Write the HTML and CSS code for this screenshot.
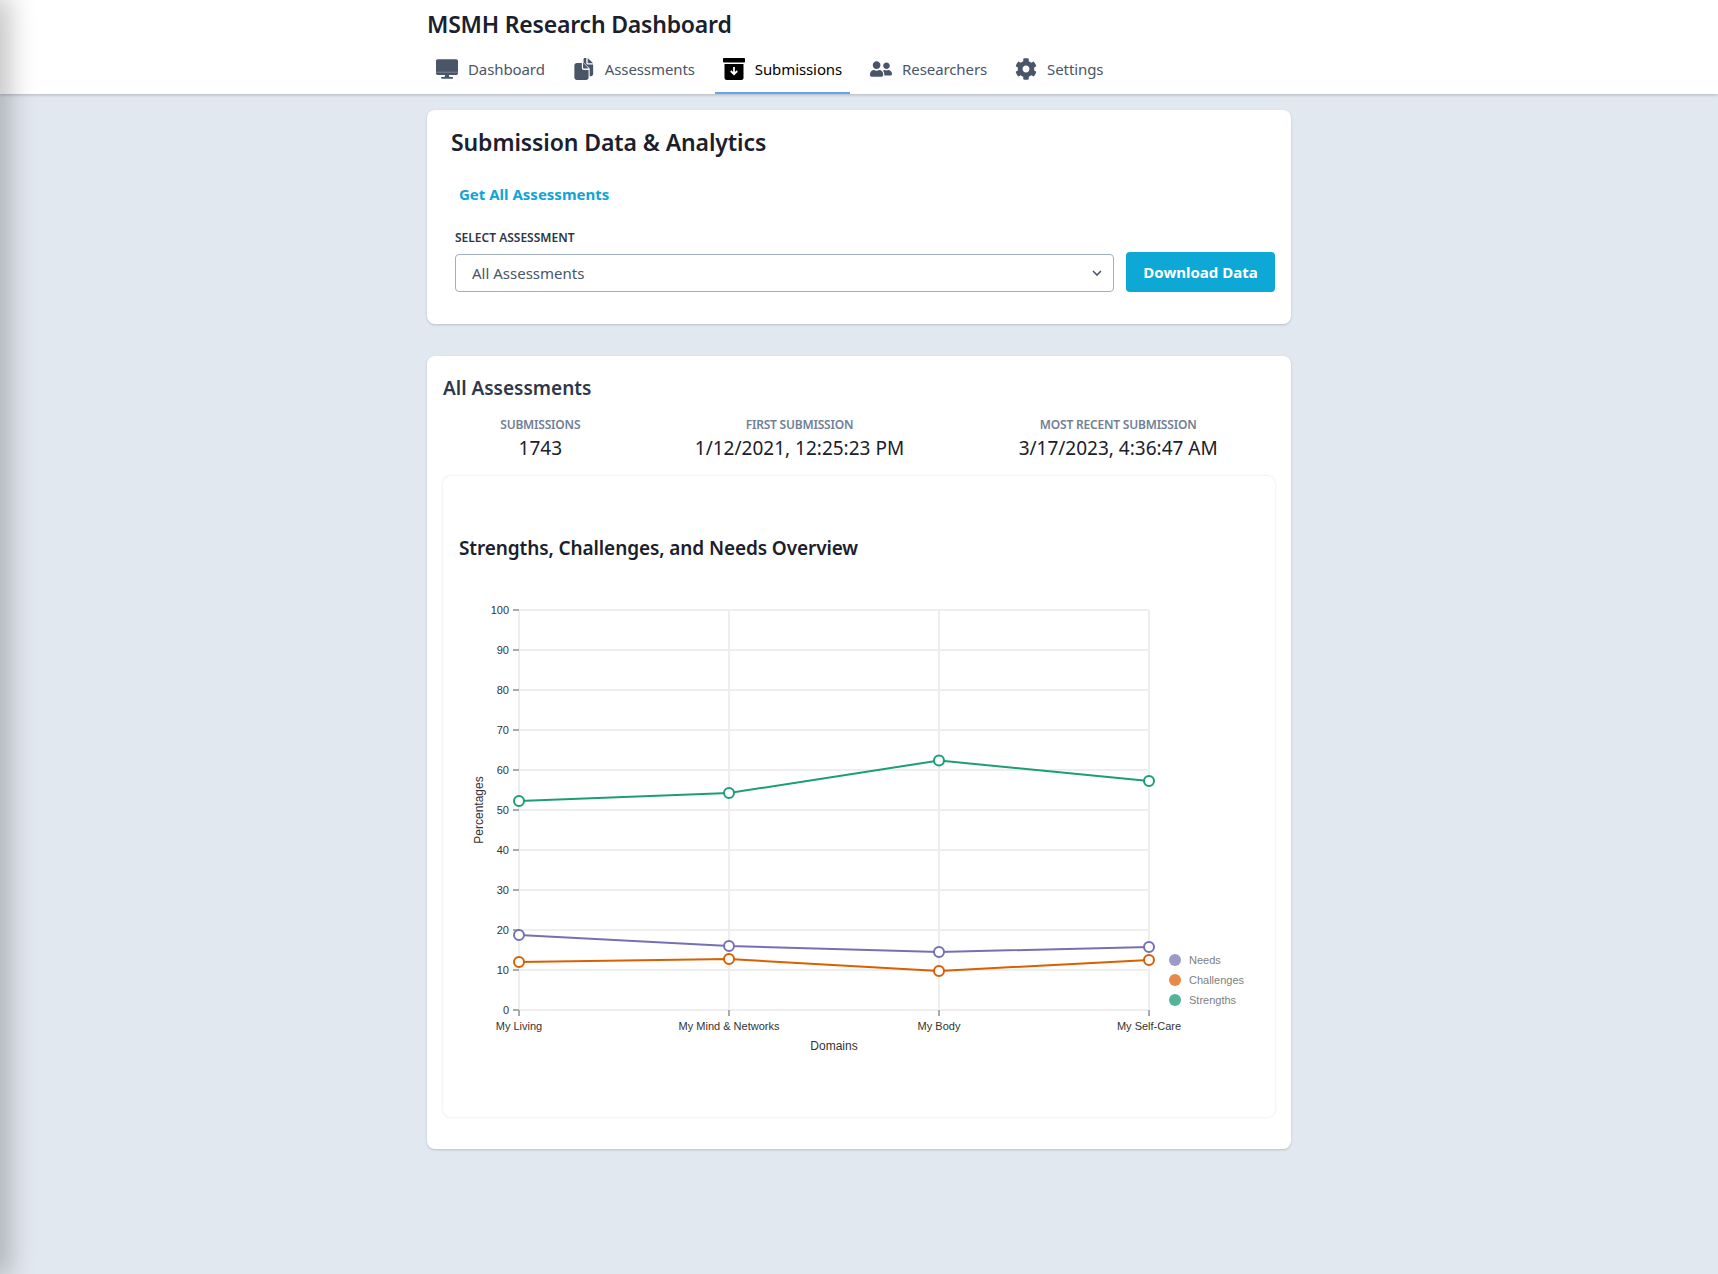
FILE: index.html
```html
<!DOCTYPE html>
<html lang="en">
<head>
<meta charset="utf-8">
<title>MSMH Research Dashboard</title>
<link rel="stylesheet" href="styles.css">
</head>
<body>
<div class="offcanvas"></div>
<header class="topbar">
  <div class="wrap">
    <h1 class="brand">MSMH Research Dashboard</h1>
    <nav class="tabs">
      <a class="tab">
        <svg class="ico" viewBox="0 0 576 512"><path d="M528 0H48C21.5 0 0 21.5 0 48v320c0 26.5 21.5 48 48 48h192l-16 48h-72c-13.3 0-24 10.7-24 24s10.7 24 24 24h272c13.3 0 24-10.7 24-24s-10.7-24-24-24h-72l-16-48h192c26.5 0 48-21.5 48-48V48c0-26.5-21.5-48-48-48z"/><rect x="0" y="330" width="576" height="14" fill="#fff" opacity=".55"/></svg>
        <span>Dashboard</span>
      </a>
      <a class="tab">
        <svg class="ico" viewBox="0 0 22 24"><path d="M7.5 5.5h1.2v5.3c0 1.2 1 2.2 2.2 2.2h5.1v8.2c0 1.5-1.2 2.8-2.8 2.8H3.3C1.7 24 .5 22.700.5 21.200V8.300c0-1.500 1.200-2.800 2.800-2.800z"/><path d="M10 5v5.500c0 .6.5 1 1 1h5z" fill="#4a5568"/><path d="M10.500 1.300C10.500.6 11.100 0 11.800 0h1.700v5.500c0 1 .8 1.700 1.700 1.700H21v10.300c0 1.300-1 2.300-2.300 2.300h-1.500v-8.300L10.500 5z"/><path d="M15 0l6 5.800h-5c-.6 0-1-.4-1-1z"/></svg>
        <span>Assessments</span>
      </a>
      <a class="tab tab-active">
        <svg class="ico" viewBox="0 0 22 22"><rect x="0" y="0" width="22" height="4.500" rx=".8"/><path d="M1.500 6h19v13.500a2.500 2.500 0 0 1-2.500 2.500H4a2.500 2.500 0 0 1-2.500-2.500z"/><path d="M11 9v7M7.800 13l3.200 3.300 3.200-3.300" fill="none" stroke="#fff" stroke-width="1.800"/></svg>
        <span>Submissions</span>
      </a>
      <a class="tab">
        <svg class="ico" viewBox="0 0 640 512"><path d="M192 256c61.900 0 112-50.100 112-112S253.900 32 192 32 80 82.100 80 144s50.100 112 112 112zm76.800 32h-8.300c-20.800 10-43.900 16-68.500 16s-47.600-6-68.500-16h-8.300C51.600 288 0 339.600 0 403.200V432c0 26.500 21.500 48 48 48h288c26.500 0 48-21.500 48-48v-28.800c0-63.600-51.600-115.200-115.200-115.200zM480 256c53 0 96-43 96-96s-43-96-96-96-96 43-96 96 43 96 96 96zm48 32h-3.800c-13.900 4.800-28.600 8-44.200 8s-30.300-3.200-44.200-8H432c-20.400 0-39.200 5.900-55.700 15.400 24.400 26.300 39.700 61.200 39.700 99.800v38.400c0 2.200-.5 4.300-.6 6.400H592c26.500 0 48-21.500 48-48 0-61.900-50.100-112-112-112z"/></svg>
        <span>Researchers</span>
      </a>
      <a class="tab">
        <svg class="ico" viewBox="0 0 512 512"><path d="M487.400 315.700l-42.600-24.600c4.300-23.200 4.300-47 0-70.200l42.600-24.600c4.900-2.800 7.100-8.600 5.500-14-11.100-35.600-30-67.800-54.700-94.600-3.800-4.100-10-5.100-14.800-2.300L380.800 110c-17.900-15.400-38.500-27.300-60.800-35.100V25.800c0-5.600-3.900-10.500-9.400-11.700-36.700-8.200-74.300-7.800-109.200 0-5.500 1.200-9.400 6.100-9.400 11.700V75c-22.200 7.900-42.800 19.800-60.800 35.100L88.700 85.500c-4.900-2.800-11-1.900-14.800 2.300-24.700 26.700-43.600 58.900-54.700 94.600-1.700 5.400.6 11.200 5.500 14L67.300 221c-4.300 23.200-4.300 47 0 70.200l-42.600 24.600c-4.900 2.800-7.100 8.600-5.500 14 11.100 35.600 30 67.800 54.700 94.600 3.800 4.100 10 5.100 14.800 2.300l42.600-24.600c17.900 15.400 38.500 27.300 60.800 35.100v49.200c0 5.600 3.900 10.500 9.400 11.700 36.700 8.200 74.300 7.800 109.200 0 5.500-1.200 9.400-6.100 9.400-11.700v-49.200c22.200-7.900 42.800-19.800 60.800-35.100l42.600 24.600c4.900 2.800 11 1.900 14.800-2.300 24.700-26.700 43.600-58.900 54.700-94.600 1.500-5.500-.7-11.300-5.600-14.100zM256 336c-44.100 0-80-35.900-80-80s35.900-80 80-80 80 35.900 80 80-35.900 80-80 80z"/></svg>
        <span>Settings</span>
      </a>
    </nav>
  </div>
</header>

<main class="wrap page">
  <section class="card card-form">
    <h2 class="page-title">Submission Data &amp; Analytics</h2>
    <a class="link">Get All Assessments</a>
    <div class="form-row">
      <div class="field">
        <label class="field-label">Select Assessment</label>
        <div class="select">
          <span>All Assessments</span>
          <svg class="chev" viewBox="0 0 10 6"><path d="M1 1l4 4 4-4" fill="none" stroke="#4a5568" stroke-width="1.600"/></svg>
        </div>
      </div>
      <button class="btn">Download Data</button>
    </div>
  </section>

  <section class="card card-results">
    <h3 class="results-title">All Assessments</h3>
    <div class="stats">
      <div class="stat"><div class="stat-label">Submissions</div><div class="stat-value">1743</div></div>
      <div class="stat"><div class="stat-label">First Submission</div><div class="stat-value">1/12/2021, 12:25:23 PM</div></div>
      <div class="stat"><div class="stat-label">Most Recent Submission</div><div class="stat-value">3/17/2023, 4:36:47 AM</div></div>
    </div>
    <div class="chart-card">
      <h4 class="chart-title">Strengths, Challenges, and Needs Overview</h4>
      <svg class="chart" viewBox="459 570 800 531">
        <g class="grid">
          <path d="M519 610H1149M519 650H1149M519 690H1149M519 730H1149M519 770H1149M519 810H1149M519 850H1149M519 890H1149M519 930H1149M519 970H1149M519 1010H1149"/>
          <path d="M519 610V1010M729 610V1010M939 610V1010M1149 610V1010"/>
        </g>
        <path class="ticks" d="M513 610H519M513 650H519M513 690H519M513 730H519M513 770H519M513 810H519M513 850H519M513 890H519M513 930H519M513 970H519M513 1010H519M519 1010V1016M729 1010V1016M939 1010V1016M1149 1010V1016"/>
        <g class="y-labels">
          <text x="509" y="614">100</text><text x="509" y="654">90</text><text x="509" y="694">80</text><text x="509" y="734">70</text><text x="509" y="774">60</text><text x="509" y="814">50</text><text x="509" y="854">40</text><text x="509" y="894">30</text><text x="509" y="934">20</text><text x="509" y="974">10</text><text x="509" y="1014">0</text>
        </g>
        <g class="x-labels">
          <text x="519" y="1030">My Living</text><text x="729" y="1030">My Mind &amp; Networks</text><text x="939" y="1030">My Body</text><text x="1149" y="1030">My Self-Care</text>
        </g>
        <text class="axis-title" x="834" y="1050">Domains</text>
        <text class="axis-title" transform="translate(483 810) rotate(-90)">Percentages</text>

        <g class="series s-strengths">
          <polyline points="519,801 729,793 939,760.500 1149,781"/>
          <circle cx="519" cy="801" r="5"/><circle cx="729" cy="793" r="5"/><circle cx="939" cy="760.500" r="5"/><circle cx="1149" cy="781" r="5"/>
        </g>
        <g class="series s-needs">
          <polyline points="519,935 729,946 939,952 1149,947"/>
          <circle cx="519" cy="935" r="5"/><circle cx="729" cy="946" r="5"/><circle cx="939" cy="952" r="5"/><circle cx="1149" cy="947" r="5"/>
        </g>
        <g class="series s-challenges">
          <polyline points="519,962 729,959 939,971 1149,960"/>
          <circle cx="519" cy="962" r="5"/><circle cx="729" cy="959" r="5"/><circle cx="939" cy="971" r="5"/><circle cx="1149" cy="960" r="5"/>
        </g>

        <g class="legend">
          <circle class="l-needs" cx="1175" cy="960" r="6"/><text x="1189" y="964">Needs</text>
          <circle class="l-challenges" cx="1175" cy="980" r="6"/><text x="1189" y="984">Challenges</text>
          <circle class="l-strengths" cx="1175" cy="1000" r="6"/><text x="1189" y="1004">Strengths</text>
        </g>
      </svg>
    </div>
  </section>
</main>
</body>
</html>
```

FILE: styles.css
```css
* { box-sizing: border-box; }
html, body { margin: 0; padding: 0; }
body {
  min-height: 1274px;
  background: #e2e8f0;
  font-family: "Noto Sans", "Open Sans", sans-serif;
  color: #1a202c;
  overflow: hidden;
}
.offcanvas {
  position: fixed;
  top: 0;
  bottom: 0;
  left: -12px;
  width: 12px;
  box-shadow: 0 0 30px 4px rgba(0, 0, 0, .38);
  z-index: 5;
}
.wrap { width: 864px; margin: 0 auto; }
.topbar {
  height: 94px;
  background: #fff;
  box-shadow: 0 1px 3px rgba(0, 0, 0, .22);
}
.brand {
  margin: 0;
  height: 48px;
  padding-top: 8px;
  font-size: 23px;
  line-height: 32px;
  font-weight: 600;
  color: #1a202c;
  letter-spacing: -.2px;
}
.tabs { display: flex; gap: 12px; height: 46px; padding-left: 1px; }
.tab {
  display: flex;
  align-items: center;
  gap: 10px;
  height: 46px;
  padding: 0 8px 2px;
  border-bottom: 2px solid transparent;
  font-size: 15px;
  color: #4a5568;
  letter-spacing: -.1px;
}
.tab-active { color: #000; border-bottom-color: #63a4f0; }
.ico { width: 22px; height: 22px; fill: #4a5568; flex: none; }
.tab-active .ico { fill: #000; }

.page { padding-top: 16px; }
.card {
  background: #fff;
  border-radius: 8px;
  padding: 16px;
  box-shadow: 0 1px 3px rgba(0, 0, 0, .12), 0 1px 2px rgba(0, 0, 0, .06);
}
.card-form { height: 214px; margin-bottom: 32px; }
.page-title {
  margin: 0 0 0 8px;
  height: 56px;
  font-size: 23px;
  line-height: 32px;
  font-weight: 600;
  letter-spacing: -.1px;
}
.link {
  display: block;
  margin-left: 16px;
  height: 48px;
  font-size: 15px;
  line-height: 24px;
  font-weight: 700;
  color: #0ea5d6;
}
.form-row {
  display: flex;
  align-items: flex-end;
  gap: 12px;
  margin-left: 12px;
}
.field { flex: 1; }
.field-label {
  display: block;
  font-size: 12px;
  line-height: 16px;
  font-weight: 600;
  text-transform: uppercase;
  color: #2d3748;
  margin-bottom: 8px;
}
.select {
  display: flex;
  align-items: center;
  justify-content: space-between;
  height: 38px;
  padding: 0 11px 0 16px;
  border: 1px solid #a0aec0;
  border-radius: 4px;
  font-size: 15px;
  color: #4a5568;
}
.chev { width: 10px; height: 6px; }
.btn {
  width: 149px;
  height: 40px;
  border: 0;
  border-radius: 4px;
  background: #0ea8d6;
  color: #fff;
  font-family: inherit;
  font-size: 15px;
  font-weight: 700;
}

.card-results { height: 793px; }
.results-title {
  margin: 2px 0 15px;
  font-size: 19px;
  line-height: 28px;
  font-weight: 600;
  color: #2d3748;
}
.stats { display: flex; justify-content: space-around; text-align: center; }
.stat-label {
  font-size: 12px;
  line-height: 16px;
  font-weight: 600;
  text-transform: uppercase;
  color: #718096;
  letter-spacing: -.2px;
}
.stat-value {
  margin-top: 1px;
  font-size: 19px;
  line-height: 28px;
  color: #1a202c;
}
.chart-card {
  margin-top: 14px;
  height: 641px;
  padding: 16px;
  border-radius: 8px;
  background: #fff;
  box-shadow: 0 0 3px rgba(0, 0, 0, .12);
}
.chart-title {
  margin: 42px 0 8px;
  font-size: 19px;
  line-height: 28px;
  font-weight: 600;
  color: #1a202c;
  letter-spacing: -.1px;
}
.chart {
  display: block;
  width: 800px;
  height: 531px;
  font-family: "Liberation Sans", Arial, sans-serif;
}
.grid path { fill: none; stroke: #eee; stroke-width: 2; }
.ticks { fill: none; stroke: #aaa; stroke-width: 2; }
.y-labels text { font-size: 11px; text-anchor: end; fill: #333; }
.x-labels text { font-size: 11px; text-anchor: middle; fill: #333; }
.axis-title { font-size: 12px; text-anchor: middle; fill: #333; }
.series polyline { fill: none; stroke-width: 2; }
.series circle { fill: #fff; stroke-width: 2; }
.s-strengths polyline, .s-strengths circle { stroke: #1b9e77; }
.s-needs polyline, .s-needs circle { stroke: #7570b3; }
.s-challenges polyline, .s-challenges circle { stroke: #d95f02; }
.legend text { font-size: 11px; fill: #808080; }
.l-needs { fill: #9e9ac8; }
.l-challenges { fill: #e6894a; }
.l-strengths { fill: #52b596; }
```
